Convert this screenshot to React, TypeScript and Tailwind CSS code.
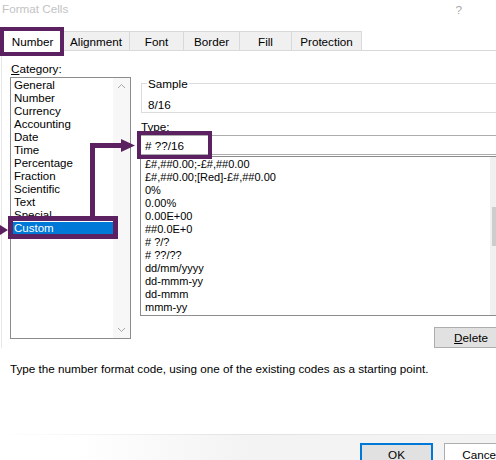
import React from "react";

const categories = ["General","Number","Currency","Accounting","Date","Time","Percentage","Fraction","Scientific","Text","Special","Custom"];
const formats = ["£#,##0.00;-£#,##0.00","£#,##0.00;[Red]-£#,##0.00","0%","0.00%","0.00E+00","##0.0E+0","# ?/?","# ??/??","dd/mm/yyyy","dd-mmm-yy","dd-mmm","mmm-yy"];

const tabs = [
  { label: "Alignment", w: "w-[67px]" },
  { label: "Font", w: "w-[54px]" },
  { label: "Border", w: "w-[56px]" },
  { label: "Fill", w: "w-[52px]" },
  { label: "Protection", w: "w-[70px]" },
];

export default function App() {
  return (
    <div className="relative w-[496px] h-[460px] overflow-hidden bg-white text-black text-[11.7px] leading-[13px] font-['Liberation_Sans',Arial,sans-serif]">
      {/* title */}
      <div className="h-[31px] flex justify-between items-start">
        <div className="pl-[2px] pt-[2px] text-[#c3c3c3]">Format Cells</div>
        <div className="pr-[34px] pt-[3px] text-[#a8a8a8]">?</div>
      </div>
      {/* tabs */}
      <div className="flex items-end h-[20px] border-b border-[#d9d9d9]">
        <div className="ml-[2px] w-[61px] h-[22px] -mb-px bg-white border border-b-0 border-[#d9d9d9] flex items-center justify-center pt-[1px]">Number</div>
        {tabs.map((t) => (
          <div key={t.label} className={`${t.w} h-[19px] bg-[#f0f0f0] border-t border-r border-[#d9d9d9] flex items-center justify-center`}>
            {t.label}
          </div>
        ))}
      </div>
      {/* body */}
      <div className="flex pl-[8px] border-l border-[#e6e6e6] ml-px">
        <div className="w-[122px] flex flex-col">
          <div className="pt-[11px] pl-px"><span className="underline">C</span>ategory:</div>
          <div className="mt-[2px] h-[262px] border border-[#8c8c8c] flex">
            <div className="flex-1 pl-[2px] pt-[1px] text-[11.5px]">
              {categories.map((c) => (
                <div key={c} className={`h-[13px] px-[1px] ${c === "Custom" ? "bg-[#0078d7] text-white w-[100px]" : ""}`}>{c}</div>
              ))}
            </div>
            <div className="w-[17px] bg-[#f7f7f7] flex flex-col justify-between items-center py-[5px]">
              <svg width="9" height="6" viewBox="0 0 9 6"><path d="M1 5 L4.5 1.5 L8 5" fill="none" stroke="#a6a6a6" strokeWidth="1" /></svg>
              <svg width="9" height="6" viewBox="0 0 9 6"><path d="M1 1 L4.5 4.5 L8 1" fill="none" stroke="#a6a6a6" strokeWidth="1" /></svg>
            </div>
          </div>
        </div>
        <div className="ml-[9px] w-[368px] shrink-0 flex flex-col">
          <fieldset className="mt-[26px] ml-px border border-[#dcdcdc] px-[6px] pb-[1px]">
            <legend className="px-[1px] -ml-[1px] leading-[13px]">Sample</legend>
            <div className="pt-[8px]">8/16</div>
          </fieldset>
          <div className="mt-[7px] pl-px"><span className="underline">T</span>ype:</div>
          <div className="mt-[2px] h-[20px] border border-[#adadad] flex items-center pl-[4px]">
            # ??/16
          </div>
          <div className="mt-[1px] h-[160px] border border-[#8c8c8c] flex">
            <div className="flex-1 pl-[4px] pt-[1px] text-[11px]">
              {formats.map((f) => (
                <div key={f} className="h-[13px]">{f}</div>
              ))}
            </div>
            <div className="w-[17px] bg-[#f0f0f0] flex flex-col">
              <div className="h-[50px]" />
              <div className="h-[39px] bg-[#cdcdcd] mx-[2px]" />
            </div>
          </div>
          <div className="mt-[11px] flex justify-end">
            <div className="w-[74px] h-[21px] bg-[#e1e1e1] border border-[#adadad] flex items-center justify-center"><span className="underline">D</span>elete</div>
          </div>
        </div>
      </div>
      <div className="mt-[14px] pl-[10px]">Type the number format code, using one of the existing codes as a starting point.</div>
      {/* footer */}
      <div className="mt-[59px] h-px bg-gradient-to-r from-transparent via-[#e2e2e2] to-[#ececec]" />
      <div className="h-[26px] bg-gradient-to-r from-white from-[15%] to-[#f3f3f3] to-[50%] flex pt-[8px] pl-[360px] gap-[11px]">
        <div className="w-[73px] h-[23px] shrink-0 bg-[#e1e1e1] border-2 border-[#0078d7] flex items-center justify-center">OK</div>
        <div className="w-[73px] h-[23px] shrink-0 bg-white border border-[#adadad] flex items-center justify-center">Cancel</div>
      </div>

      {/* annotations */}
      <div className="absolute left-0 top-[27px] w-[64px] h-[29px] border-4 border-[#5c2160]" />
      <div className="absolute left-[8px] top-[216px] w-[110px] h-[23px] border-[5px] border-[#5c2160]" />
      <div className="absolute left-[137px] top-[131px] w-[75px] h-[28px] border-4 border-[#5c2160]" />
      <svg className="absolute left-0 top-0 pointer-events-none" width="496" height="460">
        <rect x="90" y="143" width="5" height="73" fill="#5c2160" />
        <rect x="90" y="143" width="32" height="5" fill="#5c2160" />
        <polygon points="121,139 135,145.5 121,152" fill="#5c2160" />
        <polygon points="0,225 8,230 0,235" fill="#5c2160" />
      </svg>
    </div>
  );
}
